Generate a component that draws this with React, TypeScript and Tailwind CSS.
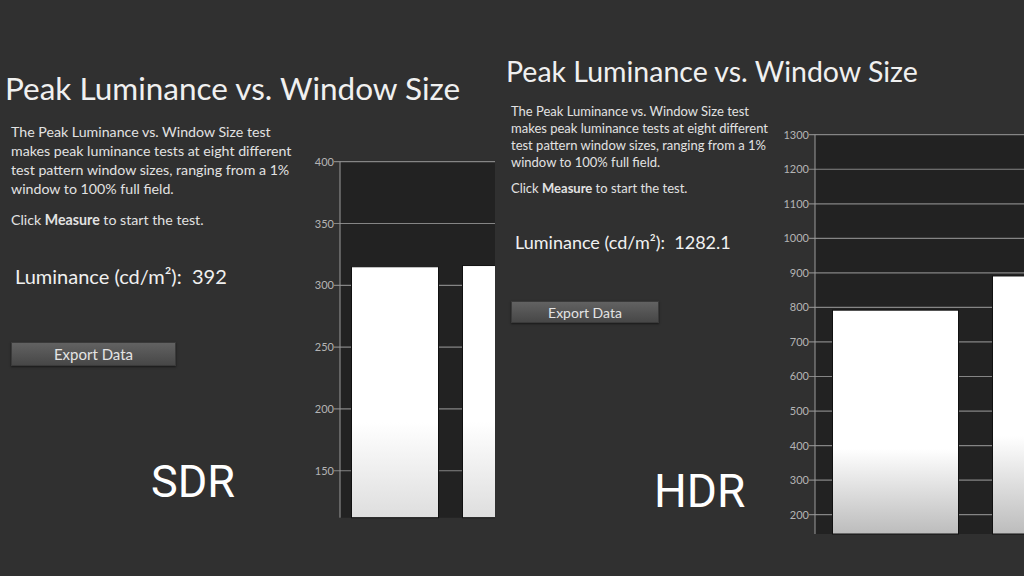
type Bar = { x: number; w: number; value: number };

type ChartProps = {
  id: string;
  width: number;
  height: number;
  axisX: number;
  top: number;
  bottom: number;
  max: number;
  min: number;
  ticks: number[];
  bars: Bar[];
  fade: string;
};

function BarChart({ id, width, height, axisX, top, bottom, max, min, ticks, bars, fade }: ChartProps) {
  const y = (v: number) => top + ((max - v) * (bottom - top)) / (max - min);
  return (
    <svg width={width} height={height} className="block shrink-0">
      <defs>
        <linearGradient id={id} x1="0" y1="0" x2="0" y2="1">
          <stop offset="0" stopColor="#ffffff" />
          <stop offset="0.62" stopColor="#ffffff" />
          <stop offset="1" stopColor={fade} />
        </linearGradient>
      </defs>
      <rect x={axisX} y={top} width={width - axisX} height={bottom - top} fill="#222222" />
      {ticks.map((t) => (
        <g key={t}>
          <line x1={axisX - 6} x2={width} y1={y(t)} y2={y(t)} stroke="#858585" strokeWidth={1.2} />
          <text x={axisX - 6} y={y(t) + 4} textAnchor="end" fontSize={11} fill="#b4b4b4" fontFamily="Lato, sans-serif">
            {t}
          </text>
        </g>
      ))}
      <line x1={axisX} x2={axisX} y1={top} y2={bottom} stroke="#9a9a9a" strokeWidth={1} />
      {bars.map((b) => (
        <rect key={b.x} x={b.x} y={y(b.value)} width={b.w} height={bottom - y(b.value)} fill={`url(#${id})`} stroke="#111111" strokeWidth={1} />
      ))}
    </svg>
  );
}

function SdrPanel() {
  return (
    <div className="w-[495px] h-full shrink-0 overflow-hidden flex flex-col pt-[73px] font-[Lato,sans-serif]">
      <h1 className="pl-[5px] text-[31.5px] leading-[31.5px] text-[#f0f0f0] whitespace-nowrap">Peak Luminance vs. Window Size</h1>
      <div className="flex mt-[17.5px]">
        <div className="w-[300px] shrink-0 pl-[11px] flex flex-col">
          <p className="text-[14.2px] leading-[19px] text-[#e2e2e2]">
            The Peak Luminance vs. Window Size test makes peak luminance tests at eight different test pattern window sizes, ranging from a 1% window to 100% full field.
          </p>
          <p className="mt-[12px] text-[14.2px] leading-[19px] text-[#e2e2e2]">
            Click <b className="font-bold">Measure</b> to start the test.
          </p>
          <p className="mt-[35px] ml-[4px] text-[20px] leading-[24px] text-[#f0f0f0] whitespace-pre">Luminance (cd/m²):  392</p>
          <button className="mt-[54px] w-[165px] h-[24px] flex items-center justify-center text-[15px] text-[#e4e4e4] bg-linear-to-b from-[#626262] to-[#474747] border border-[#3a3a3a] shadow-[0_1px_2px_rgba(0,0,0,0.5)]">
            Export Data
          </button>
          <div className="mt-[93px] ml-[140px] font-[Roboto,sans-serif] text-[45px] leading-[45px] text-white">SDR</div>
        </div>
        <div className="mt-[33px]">
          <BarChart
            id="sdr"
            width={195}
            height={370}
            axisX={40}
            top={6.7}
            bottom={362.7}
            max={400}
            min={112}
            ticks={[400, 350, 300, 250, 200, 150]}
            bars={[
              { x: 51.5, w: 87, value: 315 },
              { x: 162.5, w: 60, value: 316 },
            ]}
            fade="#dedede"
          />
        </div>
      </div>
    </div>
  );
}

function HdrPanel() {
  return (
    <div className="flex-1 h-full overflow-hidden flex flex-col pt-[56.5px] font-[Lato,sans-serif]">
      <h1 className="pl-[11px] text-[28.5px] leading-[28.5px] text-[#f0f0f0] whitespace-nowrap">Peak Luminance vs. Window Size</h1>
      <div className="flex mt-[18px]">
        <div className="w-[275px] shrink-0 pl-[16px] flex flex-col">
          <p className="text-[13px] leading-[17px] text-[#e2e2e2]">
            The Peak Luminance vs. Window Size test makes peak luminance tests at eight different test pattern window sizes, ranging from a 1% window to 100% full field.
          </p>
          <p className="mt-[9px] text-[13px] leading-[17px] text-[#e2e2e2]">
            Click <b className="font-bold">Measure</b> to start the test.
          </p>
          <p className="mt-[34px] ml-[4px] text-[18px] leading-[22px] text-[#f0f0f0] whitespace-pre">Luminance (cd/m²):  1282.1</p>
          <button className="mt-[48px] w-[148px] h-[22px] flex items-center justify-center text-[14px] text-[#e4e4e4] bg-linear-to-b from-[#626262] to-[#474747] border border-[#3a3a3a] shadow-[0_1px_2px_rgba(0,0,0,0.5)]">
            Export Data
          </button>
          <div className="mt-[145px] ml-[143px] font-[Roboto,sans-serif] text-[46px] leading-[46px] text-white">HDR</div>
        </div>
        <div className="mt-[24px]">
          <BarChart
            id="hdr"
            width={254}
            height={415}
            axisX={45}
            top={7.7}
            bottom={407}
            max={1300}
            min={144}
            ticks={[1300, 1200, 1100, 1000, 900, 800, 700, 600, 500, 400, 300, 200]}
            bars={[
              { x: 62.5, w: 126, value: 792 },
              { x: 222.5, w: 60, value: 891 },
            ]}
            fade="#bcbcbc"
          />
        </div>
      </div>
    </div>
  );
}

export default function App() {
  return (
    <div className="w-[1024px] h-[576px] bg-[#303030] flex overflow-hidden">
      <SdrPanel />
      <HdrPanel />
    </div>
  );
}
